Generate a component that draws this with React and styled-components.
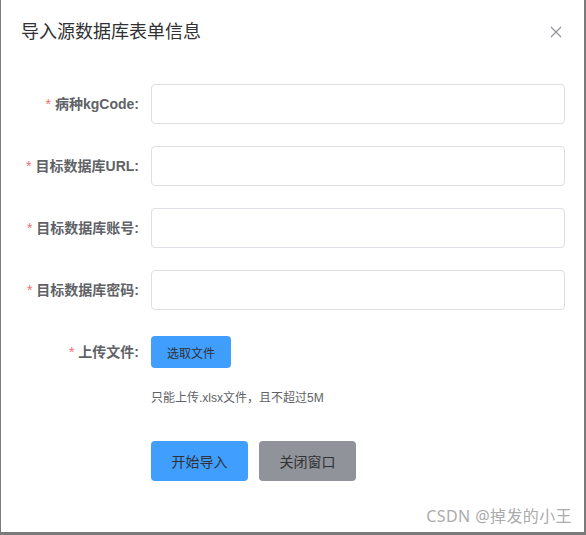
import React from "react";
import styled, { createGlobalStyle } from "styled-components";

const Global = createGlobalStyle`
  html, body { margin: 0; padding: 0; background: #7a7a7a; }
  body { font-family: "Liberation Sans", "Noto Sans CJK SC", sans-serif; }
  #root { width: 586px; height: 535px; overflow: hidden; }
`;

const Dialog = styled.div`
  position: relative;
  margin-left: 1px;
  width: 583px;
  height: 532px;
  background: #fff;
  box-sizing: border-box;
`;

const Header = styled.div`
  display: flex;
  align-items: center;
  justify-content: space-between;
  padding: 20px 22px 10px 20px;
  height: 24px;
`;

const Title = styled.span`
  font-size: 18px;
  line-height: 24px;
  color: #303133;
`;

const Close = styled.button`
  border: none;
  background: none;
  padding: 0;
  width: 12px;
  height: 12px;
  display: flex;
  cursor: pointer;
`;

const Body = styled.div`
  padding: 30px 18px 0 20px;
`;

const Item = styled.div`
  display: grid;
  grid-template-columns: 130px 414px;
  margin-bottom: ${(p) => p.$mb ?? 22}px;
`;

const Label = styled.label`
  box-sizing: border-box;
  padding-right: 12px;
  text-align: right;
  font-size: 14px;
  font-weight: bold;
  line-height: 40px;
  color: #606266;
  white-space: nowrap;
`;

const Star = styled.span`
  color: #f56c6c;
  margin-right: 4px;
  font-weight: normal;
`;

const Input = styled.input`
  box-sizing: border-box;
  width: 100%;
  height: 40px;
  border: 1px solid #dcdfe6;
  border-radius: 4px;
  outline: none;
  padding: 0 15px;
  font-size: 14px;
  background: #fff;
`;

const Content = styled.div`
  display: flex;
  flex-direction: column;
  align-items: flex-start;
`;

const Button = styled.button`
  box-sizing: border-box;
  border: none;
  border-radius: 4px;
  font-family: inherit;
  color: #303133;
  cursor: pointer;
  background: ${(p) => (p.$variant === "info" ? "#909399" : "#409eff")};
  width: ${(p) => (p.$small ? 80 : 97)}px;
  height: ${(p) => (p.$small ? 32 : 40)}px;
  font-size: ${(p) => (p.$small ? 12 : 14)}px;
  margin-top: ${(p) => (p.$small ? 4 : 0)}px;
`;

const Tip = styled.div`
  margin-top: 20px;
  font-size: 12px;
  line-height: 20px;
  color: #606266;
`;

const Actions = styled.div`
  display: flex;
  gap: 11px;
  margin-top: 33px;
`;

const Watermark = styled.div`
  position: absolute;
  right: 12px;
  bottom: 5px;
  font-size: 16px;
  color: #ababab;
  font-family: "Noto Sans", "Noto Sans CJK SC", sans-serif;
  letter-spacing: 0.4px;
`;

const fields = ["病种kgCode:", "目标数据库URL:", "目标数据库账号:", "目标数据库密码:"];

export default function App() {
  return (
    <>
      <Global />
      <Dialog>
        <Header>
          <Title>导入源数据库表单信息</Title>
          <Close aria-label="close">
            <svg width="12" height="12" viewBox="0 0 12 12">
              <path d="M1 1 L11 11 M11 1 L1 11" stroke="#909399" strokeWidth="1.2" />
            </svg>
          </Close>
        </Header>
        <Body>
          {fields.map((f) => (
            <Item key={f}>
              <Label>
                <Star>*</Star>
                {f}
              </Label>
              <Input />
            </Item>
          ))}
          <Item $mb={0}>
            <Label>
              <Star>*</Star>
              上传文件:
            </Label>
            <Content>
              <Button $small>选取文件</Button>
              <Tip>只能上传.xlsx文件，且不超过5M</Tip>
              <Actions>
                <Button>开始导入</Button>
                <Button $variant="info">关闭窗口</Button>
              </Actions>
            </Content>
          </Item>
        </Body>
        <Watermark>CSDN @掉发的小王</Watermark>
      </Dialog>
    </>
  );
}
